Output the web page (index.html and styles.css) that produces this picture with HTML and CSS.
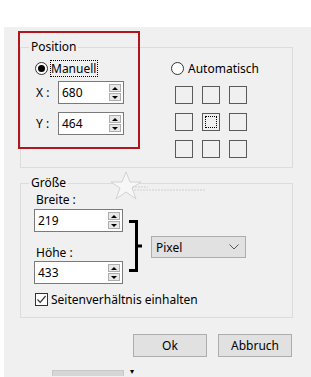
FILE: index.html
```html
<!DOCTYPE html>
<html lang="de">
<head>
  <meta charset="UTF-8" />
  <title>Position und Größe</title>
  <link rel="stylesheet" href="styles.css">
</head>
<body>
  <div class="window">
    <fieldset class="group group-pos">
      <legend>Position</legend>
      <div class="pos-body">
        <div class="col-manual">
          <div class="radio-row">
            <span class="radio checked"></span>
            <span class="focus-label">Manuell</span>
          </div>
          <div class="field-row first">
            <span class="axis">X :</span>
            <div class="spin short">
              <span class="val">680</span>
              <span class="spin-btns"><i class="up"></i><i class="down"></i></span>
            </div>
          </div>
          <div class="field-row">
            <span class="axis">Y :</span>
            <div class="spin short">
              <span class="val">464</span>
              <span class="spin-btns"><i class="up"></i><i class="down"></i></span>
            </div>
          </div>
        </div>
        <div class="col-auto">
          <div class="radio-row">
            <span class="radio"></span>
            <span class="plain-label">Automatisch</span>
          </div>
          <div class="anchor-grid">
            <span class="cell"></span><span class="cell"></span><span class="cell"></span>
            <span class="cell"></span><span class="cell active"></span><span class="cell"></span>
            <span class="cell"></span><span class="cell"></span><span class="cell"></span>
          </div>
        </div>
      </div>
    </fieldset>

    <fieldset class="group group-size">
      <legend>Größe</legend>
      <div class="size-row">
        <div class="size-fields">
          <div class="size-label">Breite :</div>
          <div class="spin wide">
            <span class="val">219</span>
            <span class="spin-btns"><i class="up"></i><i class="down"></i></span>
          </div>
          <div class="size-label second">Höhe :</div>
          <div class="spin wide">
            <span class="val">433</span>
            <span class="spin-btns"><i class="up"></i><i class="down"></i></span>
          </div>
        </div>
        <svg class="bracket" width="18" height="54" viewBox="0 0 18 54">
          <path d="M3 2.5 H10.5 V51.5 H3 M10.5 27 H16" fill="none" stroke="#000" stroke-width="3"/>
        </svg>
        <div class="select">
          <span>Pixel</span>
          <svg width="10" height="6" viewBox="0 0 10 6"><path d="M0.5 0.5 L5 5 L9.5 0.5" fill="none" stroke="#555" stroke-width="1"/></svg>
        </div>
      </div>
      <div class="check-row">
        <span class="checkbox">
          <svg width="11" height="11" viewBox="0 0 11 11"><path d="M1.5 5.5 L4.2 8.3 L9.6 2" fill="none" stroke="#333" stroke-width="1.2"/></svg>
        </span>
        <span>Seitenverhältnis einhalten</span>
      </div>
    </fieldset>

    <div class="buttons">
      <button class="btn">Ok</button>
      <button class="btn">Abbruch</button>
    </div>

    <div class="peek">
      <span class="peek-bar"></span>
      <span class="peek-arrow">▾</span>
    </div>
  </div>

  <svg class="watermark" width="100" height="34" viewBox="0 0 100 34">
    <polygon points="16,1 20,11 31,11 22,17 26,28 16,21 6,28 10,17 1,11 12,11" fill="#f7f7f7" stroke="#d2d2d2" stroke-width="1"/>
    <path d="M22 16 H38 M24 19 H96" stroke="#cfcfcf" stroke-width="1" stroke-dasharray="2 1"/>
  </svg>

  <div class="highlight"></div>
</body>
</html>
```

FILE: styles.css
```css
body {
  margin: 0;
  background: #ffffff;
  font-family: "Noto Sans", "Open Sans", sans-serif;
  font-size: 12px;
  color: #000;
  height: 377px;
  overflow: hidden;
  position: relative;
}

.window {
  margin: 27px 0 0 4px;
  height: 350px;
  background: #f0f0f0;
  padding: 13px 18px 0 16px;
  box-sizing: border-box;
}

.group {
  margin: 0;
  padding: 0;
  min-width: 0;
  border: 1px solid #dcdcdc;
}

.group legend {
  margin-left: 8px;
  padding: 0 2px;
  line-height: 14px;
}

/* position group */

.pos-body {
  display: grid;
  grid-template-columns: 136px 1fr;
  padding: 6px 0 9px 14px;
}

.radio-row {
  display: flex;
  align-items: center;
  height: 17px;
}

.radio {
  width: 11px;
  height: 11px;
  border: 1px solid #333;
  border-radius: 50%;
  background: #fff;
  display: flex;
  align-items: center;
  justify-content: center;
  margin-right: 2px;
}

.radio.checked::after {
  content: "";
  width: 7px;
  height: 7px;
  border-radius: 50%;
  background: #000;
}

.focus-label {
  border: 1px dotted #000;
  line-height: 15px;
  padding: 0 1px 0 0;
}

.plain-label {
  padding-left: 2px;
}

.field-row {
  display: flex;
  align-items: center;
  margin-top: 8px;
}

.field-row.first {
  margin-top: 4px;
}

.axis {
  width: 22px;
  padding-left: 1px;
}

.spin {
  height: 23px;
  box-sizing: border-box;
  border: 1px solid #7a7a7a;
  background: #fff;
  display: flex;
  align-items: center;
  justify-content: space-between;
}

.spin.short {
  width: 66px;
}

.spin.wide {
  width: 89px;
}

.val {
  padding-left: 3px;
}

.spin-btns {
  display: flex;
  flex-direction: column;
  gap: 1px;
  margin-right: 2px;
}

.spin-btns i {
  width: 12px;
  height: 8px;
  box-sizing: border-box;
  border: 1px solid #adadad;
  background: #e8e8e8;
  display: flex;
  align-items: center;
  justify-content: center;
}

.spin-btns i::after {
  content: "";
  border-left: 3px solid transparent;
  border-right: 3px solid transparent;
}

.spin-btns .up::after {
  border-bottom: 3px solid #000;
}

.spin-btns .down::after {
  border-top: 3px solid #000;
}

.anchor-grid {
  display: grid;
  grid-template-columns: repeat(3, 18px);
  grid-auto-rows: 18px;
  gap: 9px;
  margin: 9px 0 0 4px;
}

.cell {
  border: 1px solid #5a5a5a;
  box-sizing: border-box;
  display: flex;
  align-items: center;
  justify-content: center;
}

.cell.active::after {
  content: "";
  width: 10px;
  height: 10px;
  border: 1px dotted #000;
}

/* size group */

.group-size {
  margin-top: 8px;
}

.size-row {
  display: flex;
  align-items: flex-start;
  padding: 3px 0 0 13px;
}

.size-label {
  line-height: 14px;
  padding-left: 2px;
  margin-bottom: 2px;
}

.size-label.second {
  margin-top: 14px;
  margin-bottom: 1px;
}

.bracket {
  margin: 26px 0 0 3px;
}

.select {
  width: 95px;
  height: 22px;
  box-sizing: border-box;
  margin: 43px 0 0 7px;
  border: 1px solid #adadad;
  background: #e1e1e1;
  display: flex;
  align-items: center;
  justify-content: space-between;
  padding: 0 6px 0 4px;
}

.check-row {
  display: flex;
  align-items: center;
  gap: 3px;
  padding: 8px 0 10px 14px;
  line-height: 15px;
}

.checkbox {
  width: 13px;
  height: 13px;
  box-sizing: border-box;
  border: 1px solid #333;
  background: #fff;
  display: flex;
  align-items: center;
  justify-content: center;
}

/* dialog buttons */

.buttons {
  display: flex;
  justify-content: flex-end;
  gap: 11px;
  margin-top: 16px;
  padding-right: 1px;
}

.btn {
  width: 74px;
  height: 23px;
  border: 1px solid #adadad;
  background: #e1e1e1;
  font-family: inherit;
  font-size: 12px;
  color: #000;
  padding: 0;
}

.peek {
  display: flex;
  align-items: center;
  height: 11px;
  margin-top: 8px;
  padding-left: 32px;
}

.peek-bar {
  align-self: flex-end;
  width: 70px;
  height: 5px;
  border: 1px solid #c8c8c8;
  border-bottom: 0;
  background: #d6d6d6;
}

.peek-arrow {
  font-size: 8px;
  line-height: 10px;
  margin-left: 6px;
}

.watermark {
  position: absolute;
  left: 110px;
  top: 171px;
}

.highlight {
  position: absolute;
  left: 18px;
  top: 31px;
  width: 118px;
  height: 114px;
  border: 2px solid #b0161e;
}
```
